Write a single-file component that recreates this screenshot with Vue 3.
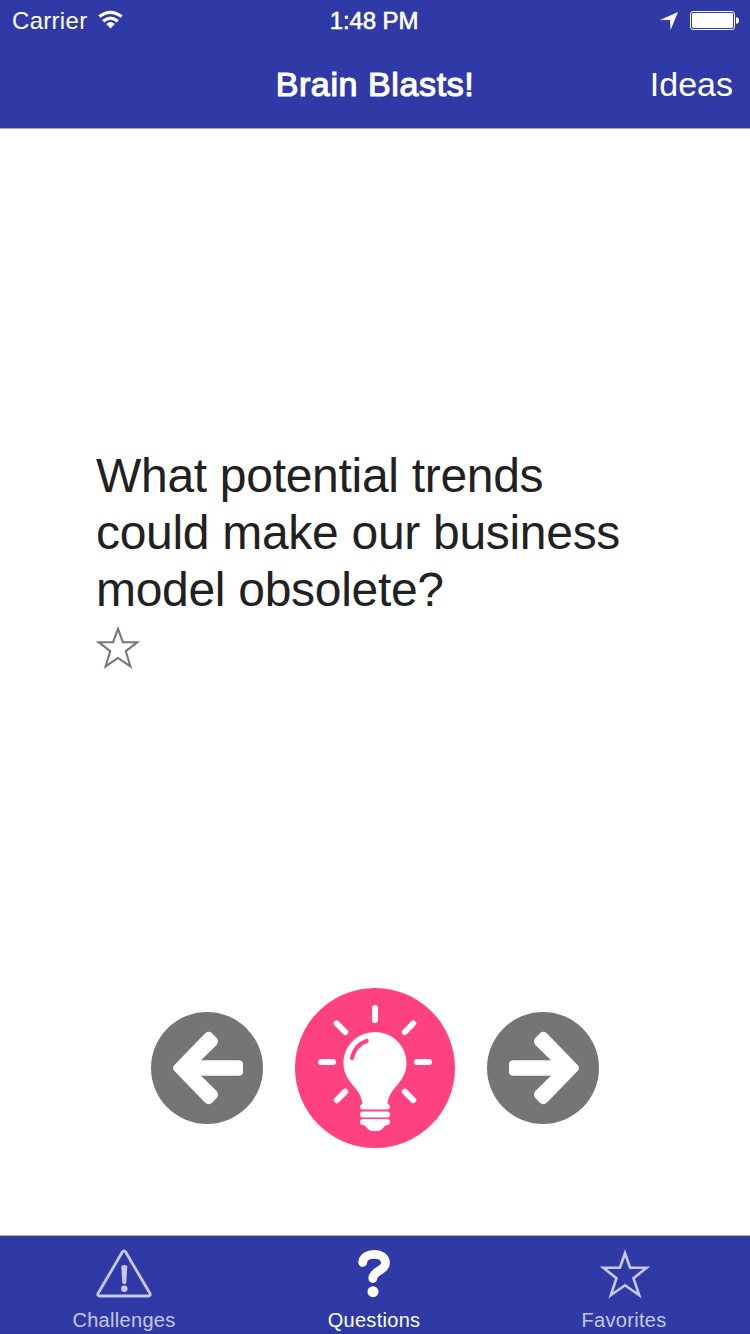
<script setup>
const lines = ['What potential trends', 'could make our business', 'model obsolete?']
</script>

<template>
  <div class="screen">
    <header class="top">
      <div class="status">
        <div class="left">
          <span class="carrier">Carrier</span>
          <svg class="wifi" width="26" height="19" viewBox="0 0 26 19">
            <g fill="none" stroke="#fff" stroke-width="3.2">
              <path d="M1.3 6.6Q12.500 -2 23.700 6.600" />
              <path d="M5.200 11.200Q12.500 5 19.800 11.200" />
            </g>
            <path d="M8.2 14Q12.500 10 16.800 14L12.500 18.600Z" fill="#fff" />
          </svg>
        </div>
        <span class="time">1:48 PM</span>
        <div class="right">
          <svg width="18" height="18" viewBox="0 0 18 18"><path d="M18 0L10.6 18L10 8H0Z" fill="#fff" /></svg>
          <svg class="battery" width="49" height="19" viewBox="0 0 49 19">
            <rect x=".5" y=".5" width="44" height="18" rx="2.6" fill="none" stroke="#fff" />
            <rect x="2" y="2" width="41" height="15" rx="1.4" fill="#fff" />
            <path d="M46 6.2Q49 6.2 49 9.5T46 12.8Z" fill="#fff" />
          </svg>
        </div>
      </div>
      <div class="nav">
        <span></span>
        <h1>Brain Blasts!</h1>
        <a class="ideas">Ideas</a>
      </div>
    </header>

    <main>
      <section class="card">
        <p class="question"><span v-for="line in lines" :key="line">{{ line }}</span></p>
        <svg class="fav" width="44" height="43" viewBox="0 0 44 43">
          <path d="M22 2.8L26.9 16.2H41.4L29.8 25.2L34.4 40.4L22 31.9L9.6 40.4L14.2 25.2L2.6 16.2H17.1Z" fill="none" stroke="#777" stroke-width="2.1" />
        </svg>
      </section>
      <div class="controls">
        <button class="round">
          <svg width="112" height="112" viewBox="0 0 112 112"><path class="arrow" d="M23.2 53.2L54.2 21.2Q57.8 18.4 61.2 21.2L65.6 26Q68.4 29.5 65.6 33L50 48.2H87.5Q92 48.2 92 52.5V59.5Q92 63.8 87.5 63.8H50L65.6 79Q68.4 82.5 65.6 86L61.2 90.8Q57.8 93.6 54.2 90.8L23.2 58.8Q20.8 56 23.2 53.2Z" /></svg>
        </button>
        <button class="round blast">
          <svg width="160" height="160" viewBox="0 0 160 160">
            <g stroke="#fff" stroke-width="6" stroke-linecap="round">
              <path d="M80 20V32M26 74H38M122 74H134M41.8 35.5L50.2 44M118.2 35.5L109.8 44M41.8 112.2L50.2 103.7M118.2 112.2L109.8 103.7" />
            </g>
            <path d="M80 44C62.5 44 48.5 58 48.5 75C48.5 95 66 99 67.5 116C65.5 116.500 65 117.500 65 119Q65 121.500 68 121.500H92Q95 121.500 95 119C95 117.500 94.500 116.500 92.500 116C94 99 111.500 95 111.500 75C111.500 58 97.500 44 80 44Z" fill="#fff" />
            <path d="M57 70Q60 57 71.600 53" fill="none" stroke="#ff4081" stroke-width="4.2" stroke-linecap="round" />
            <rect x="65" y="123.500" width="30" height="6" rx="3" fill="#fff" />
            <path d="M68 131H92Q95 131 95 134T92 137Q90 137 88 140Q86 143 83 143H77Q74 143 72 140Q70 137 68 137Q65 137 65 134T68 131Z" fill="#fff" />
          </svg>
        </button>
        <button class="round">
          <svg width="112" height="112" viewBox="0 0 112 112"><path class="arrow" transform="matrix(-1 0 0 1 114 0)" d="M23.2 53.2L54.2 21.2Q57.8 18.4 61.2 21.2L65.6 26Q68.4 29.5 65.6 33L50 48.2H87.5Q92 48.2 92 52.5V59.5Q92 63.8 87.5 63.8H50L65.6 79Q68.4 82.5 65.6 86L61.2 90.8Q57.8 93.6 54.2 90.8L23.2 58.8Q20.8 56 23.2 53.2Z" /></svg>
        </button>
      </div>
    </main>

    <footer class="tabs">
      <a class="tab">
        <svg width="56" height="50" viewBox="0 0 56 50">
          <path d="M26.5 2.8Q28 .8 29.5 2.8L54 44.5Q54.8 47 52 47H4Q1.2 47 2 44.5Z" fill="none" stroke="currentColor" stroke-width="2.8" stroke-linejoin="round" />
          <path d="M25.3 17.6Q25.3 16 28.300 16T31.300 17.600L30.300 33.500Q30.100 35.200 28.300 35.200T26.300 33.500Z" fill="currentColor" />
          <circle cx="28.3" cy="39.8" r="3.2" fill="currentColor" />
        </svg>
        <span>Challenges</span>
      </a>
      <a class="tab active">
        <svg width="56" height="50" viewBox="0 0 56 50">
          <path d="M16.7 13.5C17 8 22 5.3 28 5.3C34.5 5.3 39.500 8.500 39.500 14C39.500 21.500 26.800 22 26.800 29.500" fill="none" stroke="currentColor" stroke-width="8.8" stroke-linecap="round" />
          <circle cx="27" cy="42.7" r="5.5" fill="currentColor" />
        </svg>
        <span>Questions</span>
      </a>
      <a class="tab">
        <svg width="56" height="50" viewBox="0 0 56 50">
          <path d="M29 4.2L34.1 18.800H50.600L37.500 29.200L43.200 46.200L29 36.300L14.800 46.200L20.500 29.200L7.400 18.800H23.900Z" fill="none" stroke="currentColor" stroke-width="2.6" />
        </svg>
        <span>Favorites</span>
      </a>
    </footer>
  </div>
</template>

<style>
body { margin: 0; background: #fff; }
</style>

<style scoped>
.screen { width: 750px; height: 1334px; display: flex; flex-direction: column; overflow: hidden; background: #fff; color: #212121; font-family: "Liberation Sans", Arial, sans-serif; }
.top { height: 128px; background: #303aa6; color: #fff; border-bottom: 1px solid #aaaaa8; }
.status { height: 40px; display: grid; grid-template-columns: 1fr auto 1fr; align-items: start; font-size: 24px; line-height: 27px; }
.left { display: flex; padding: 7px 0 0 12px; }
.carrier { width: 86px; letter-spacing: .3px; }
.wifi { margin-top: 3px; }
.time { padding: 7px 2px 0 0; letter-spacing: -.1px; -webkit-text-stroke: .6px #fff; }
.right { display: flex; justify-content: flex-end; gap: 12px; padding: 11px 11px 0 0; }
.right > svg:first-child { margin-top: 1px; }
.nav { height: 88px; display: grid; grid-template-columns: 1fr auto 1fr; align-items: center; font-size: 34px; line-height: 40px; }
h1 { margin: 0; font-size: 34px; font-weight: 400; letter-spacing: .6px; -webkit-text-stroke: 1.2px #fff; }
.ideas { justify-self: end; padding-right: 17px; }
main { flex: 1; display: flex; flex-direction: column; justify-content: space-between; }
.card { padding: 318px 96px 0; }
.question { margin: 0; font-size: 48px; line-height: 57px; letter-spacing: -.3px; }
.question span { display: block; white-space: nowrap; }
.fav { display: block; margin-top: 8px; }
.controls { display: flex; justify-content: center; align-items: center; gap: 32px; padding-bottom: 87px; }
.round { width: 112px; height: 112px; padding: 0; border: 0; border-radius: 50%; background: #757575; }
.round svg { display: block; }
.blast { width: 160px; height: 160px; background: #ff4081; }
.arrow { fill: #fff; }
.tabs { height: 97px; display: flex; gap: 2px; background: #303aa6; border-top: 1px solid #aaaaa8; border-bottom: 1px solid #2b3499; }
.tab { width: 248px; display: flex; flex-direction: column; align-items: center; padding-top: 13px; color: #c6c9ea; font-size: 20px; line-height: 23px; letter-spacing: .3px; }
.tab svg { display: block; margin-bottom: 10px; }
.tab.active { color: #fff; }
</style>
